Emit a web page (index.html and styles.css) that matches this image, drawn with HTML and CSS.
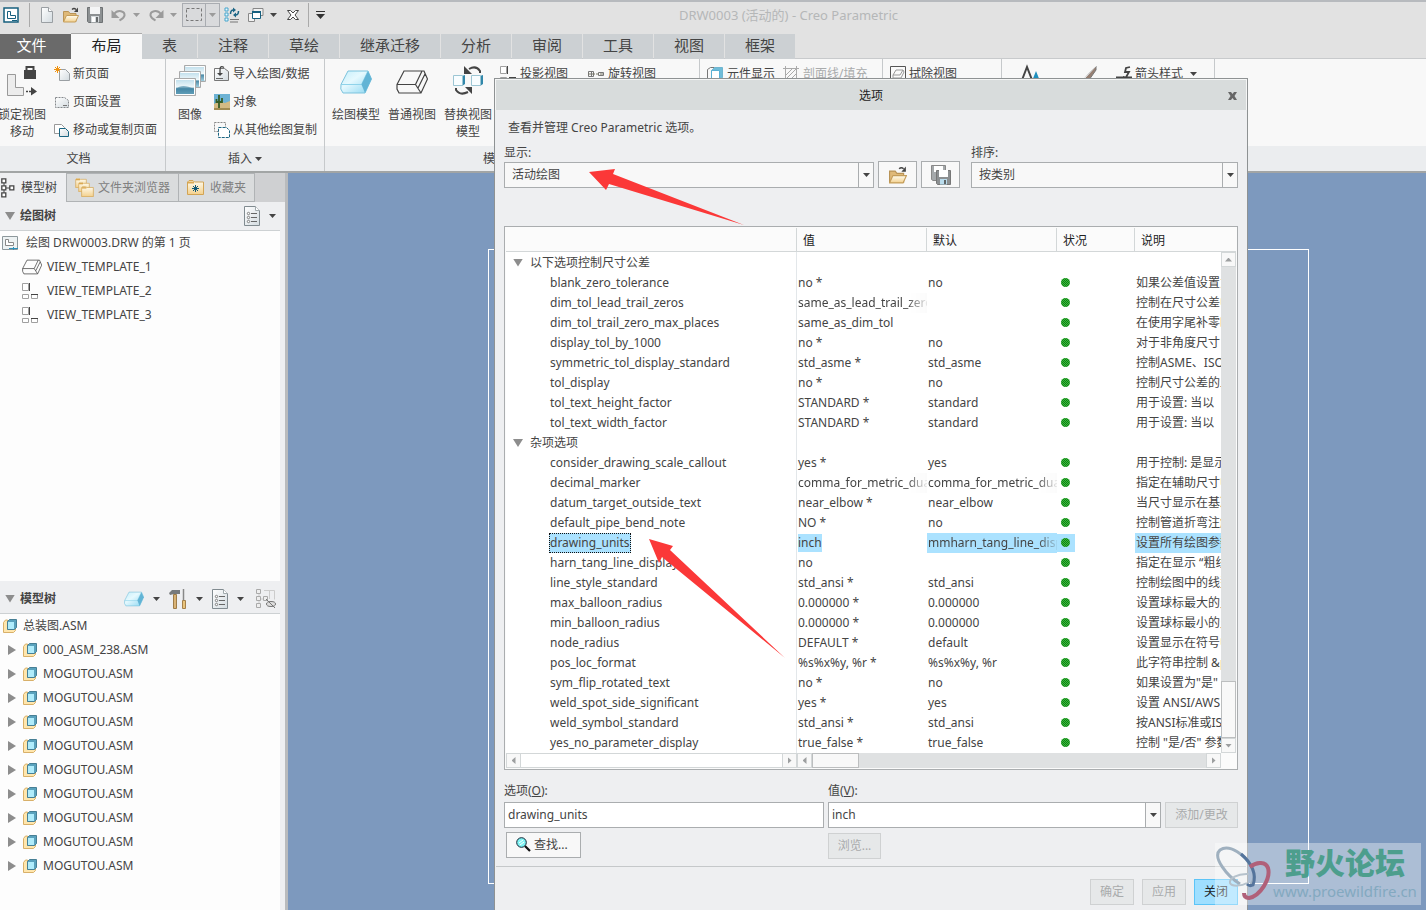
FILE: index.html
```html
<!DOCTYPE html>
<html lang="zh-CN">
<head>
  <meta charset="UTF-8">
  <meta name="viewport" content="width=device-width, initial-scale=1.0">
  <title>DRW0003 (活动的) - Creo Parametric</title>
  <link rel="stylesheet" href="styles.css">
</head>
<body>
  <!-- shared icons -->
  <svg class="sprite" aria-hidden="true">
    <defs>
      <linearGradient id="g-blue" x1="0" y1="0" x2="1" y2="1"><stop offset="0" stop-color="#c4eefb"/><stop offset=".4" stop-color="#e6f9fe"/><stop offset="1" stop-color="#8ad6f1"/></linearGradient>
      <linearGradient id="g-gold" x1="0" y1="0" x2="0" y2="1"><stop offset="0" stop-color="#fffdf2"/><stop offset="1" stop-color="#f3d08c"/></linearGradient>
      <linearGradient id="g-page" x1="0" y1="0" x2="1" y2="1"><stop offset="0" stop-color="#fff"/><stop offset="1" stop-color="#d3dbe0"/></linearGradient>
      <linearGradient id="g-sea" x1="0" y1="0" x2="0" y2="1"><stop offset="0" stop-color="#b9dbea"/><stop offset=".5" stop-color="#eef7fa"/><stop offset=".6" stop-color="#4f8ca8"/><stop offset="1" stop-color="#a6d3e3"/></linearGradient>
    </defs>
    <symbol id="i-caret" viewBox="0 0 7 4"><path d="M0 0h7L3.500 4z" fill="currentColor"/></symbol>
    <symbol id="i-page" viewBox="0 0 16 16"><path d="M2.500.5h7l4 4v11h-11z" fill="url(#g-page)" stroke="#9a9fa3"/><path d="M9.500.5v4h4" fill="#fff" stroke="#9a9fa3"/></symbol>
    <symbol id="i-open" viewBox="0 0 16 16"><path d="M.5 14.500v-10h5l1.500 2h6v8z" fill="#dfb978" stroke="#b99457"/><path d="M.5 15l3-6.500h12l-3 6.500z" fill="url(#g-gold)" stroke="#c49d5a"/><path d="M9 2.500q2-2 4 0" fill="none" stroke="#444" stroke-width="1.300"/><path d="M15 .5V5h-4z" fill="#444"/></symbol>
    <symbol id="i-save" viewBox="0 0 16 16"><path d="M.5.5h15v15h-14l-1-1z" fill="#8c9092" stroke="#6e7274"/><path d="M3 0h10v7H3z" fill="#f4f5f6"/><path d="M4 9h8v6.500H4z" fill="#d5dadd"/><path d="M5 10h3v5H5z" fill="#fff"/><path d="M9 10h2v5H9z" fill="#666a6c"/></symbol>
    <symbol id="i-saveas" viewBox="0 0 20 20"><path d="M.5.5h14v15H2l-1.500-1z" fill="#a5a9ab" stroke="#888"/><path d="M3 1h9v6H3z" fill="#fff"/><path d="M5.500 5.500h14v14h-13l-1-1z" fill="#8c9092" stroke="#777"/><path d="M8 5h9v7H8z" fill="#fff"/><path d="M9 14h7v5.500H9z" fill="#b9dced"/><path d="M13 15h2v4h-2z" fill="#5f6567"/></symbol>
    <symbol id="i-undo" viewBox="0 0 16 14"><path d="M3 6C7 1 14 3 13.500 7.500 13 10 11 11 8.500 12.500" fill="none" stroke="#9b9b9b" stroke-width="2"/><path d="M.5 2v8h8z" fill="#9b9b9b"/></symbol>
    <symbol id="i-block" viewBox="0 0 32 24"><path d="M1 14.500L8 1h20l3.500 8-6.500 14H3L.8 19z" fill="url(#g-blue)" stroke="#7cc3dd"/><path d="M1 14.500h20.500L28 1" fill="none" stroke="#8fd3ea"/><path d="M28 1l3.500 8L25 23l-3.500-8.500z" fill="#62b4d5"/></symbol>
    <symbol id="i-wire" viewBox="0 0 32 24"><path d="M1 14.500L8 1h20l3.500 8-6.500 14H3l-2-4zM1 14.500h18.500l5.500 8.500M19.500 14.500L26 1M22 18L29 4" fill="none" stroke="#444" stroke-width="1.200"/></symbol>
    <symbol id="i-views" viewBox="0 0 16 16"><path d="M.5.5h6v7h-6zM.5 11.500h6v4h-6zM9.500 11.500h6v4h-6z" fill="#fff" stroke="#a0a0a0"/><path d="M7.500 0v8" stroke="#444"/><path d="M9 11.500h7" stroke="#444"/></symbol>
    <symbol id="i-asm" viewBox="0 0 14 14"><path d="M.5 3.500l2-2.500h2v9h8v1.500l-2 2H.5z" fill="#ffe6ad" stroke="#d8b069"/><path d="M4.500 2.500l2-2h7v8l-2 2h-7z" fill="#5aa2bd" stroke="#467f95"/><path d="M5 3h6v7H5z" fill="#b0ecfb"/></symbol>
    <symbol id="i-list" viewBox="0 0 16 20"><path d="M.5.5h11l4 4v15H.5z" fill="url(#g-page)" stroke="#818b90"/><path d="M11.500.5v4h4" fill="#fff" stroke="#a1aaad"/><path d="M7 7.500h6M7 11.500h6M7 15.500h6" stroke="#666"/><g fill="#fff" stroke="#666" stroke-width=".8"><circle cx="4.500" cy="7.500" r="1.200"/><circle cx="4.500" cy="11.500" r="1.200"/><circle cx="4.500" cy="15.500" r="1.200"/></g></symbol>
    <symbol id="i-nodes" viewBox="0 0 14 20"><path d="M3 5v10M5 10h4" stroke="#444"/><path d="M.8.8h4v4h-4zM.8 7.800h4v4h-4zM.8 14.800h4v4h-4zM8.800 7.800h4v4h-4z" fill="#fff" stroke="#444" stroke-width="1.300"/></symbol>
    <symbol id="i-folder" viewBox="0 0 17 15"><path d="M.5 14.500V2L2 .5h4L7.500 2h9v12.500z" fill="url(#g-gold)" stroke="#d2a454"/><path d="M1 2.500h6" stroke="#dba952" stroke-width="2"/></symbol>
  </svg>

  <header class="titlebar">
    <div class="quickbar">
      <svg class="ic16" viewBox="0 0 16 16"><path d="M1 1h14v14H1z" fill="#fff" stroke="#17607f" stroke-width="1.500"/><path d="M4.500 4.500h3v4h5v3h-8z" fill="none" stroke="#17607f"/><path d="M9 13.500h5" stroke="#17607f"/></svg>
      <span class="bar-sep"></span>
      <button class="tool" aria-label="新建"><svg class="ic16"><use href="#i-page"/></svg></button>
      <button class="tool" aria-label="打开"><svg class="ic16"><use href="#i-open"/></svg></button>
      <button class="tool" aria-label="保存"><svg class="ic16"><use href="#i-save"/></svg></button>
      <button class="tool split off" aria-label="撤消"><svg class="ic16"><use href="#i-undo"/></svg><svg class="caret"><use href="#i-caret"/></svg></button>
      <button class="tool split off" aria-label="重做"><svg class="ic16 flip"><use href="#i-undo"/></svg><svg class="caret"><use href="#i-caret"/></svg></button>
      <button class="select-box off" aria-label="选择"><svg class="ic16" viewBox="0 0 16 14"><path d="M.5.5h15v12H.5z" fill="none" stroke="#777" stroke-dasharray="3 2"/></svg><span><svg class="caret"><use href="#i-caret"/></svg></span></button>
      <button class="tool" aria-label="重新生成"><svg class="ic16" viewBox="0 0 16 16"><path d="M1 1h3v3H1zM1 6h3v3H1zM1 11h3v3H1z" fill="#e8f7fd" stroke="#46a5cc"/><path d="M6.500 7q0-4 3-4M14.500 4q0 4-3 4" fill="none" stroke="#1c6585" stroke-width="1.500"/><path d="M9 .5L12 3 9 5.500zM12 5.500L9 8l3 2.500z" fill="#1c6585"/><path d="M6 12.500h9M6 15h8" stroke="#777"/></svg></button>
      <button class="tool split" aria-label="窗口"><svg class="ic16" viewBox="0 0 16 16"><path d="M5 1.500h10v7H5z" fill="#f2f2f2" stroke="#888"/><path d="M.5 6.500h6v8h-6z" fill="#f2f2f2" stroke="#888"/><path d="M4.500 4.500h8v7h-8z" fill="#fff" stroke="#17607f"/><path d="M4 5h9" stroke="#17607f" stroke-width="2"/></svg><svg class="caret"><use href="#i-caret"/></svg></button>
      <button class="tool close-win" aria-label="关闭窗口"><svg viewBox="0 0 12 12"><path d="M.5 1.500h3L6 4l2.500-2.500h3L8 6l3.500 4.500h-3L6 8l-2.500 2.500h-3L4 6z" fill="#fff" stroke="#444"/></svg></button>
      <span class="bar-sep"></span>
      <button class="tool more" aria-label="自定义"><svg viewBox="0 0 9 8"><path d="M0 .5h9" stroke="#333"/><path d="M0 3h9L4.500 8z" fill="#333"/></svg></button>
    </div>
    <h1>DRW0003 (活动的) - Creo Parametric</h1>
  </header>

  <nav class="tabs">
    <button class="file">文件</button>
    <button class="active">布局</button>
    <button class="short">表</button>
    <button>注释</button>
    <button>草绘</button>
    <button class="long">继承迁移</button>
    <button>分析</button>
    <button>审阅</button>
    <button>工具</button>
    <button>视图</button>
    <button>框架</button>
  </nav>

  <section class="ribbon">
    <div class="group g-doc">
      <div class="tools">
        <button class="big lock">
          <svg viewBox="0 0 32 32"><path d="M1.500 9.500h8v13h8v8h-16z" fill="#ececec" stroke="#999"/><path d="M18 5h12v9H18z" fill="#444"/><path d="M20.500 6V2h7v4" fill="none" stroke="#444" stroke-width="2"/><path d="M20 26.500h8" stroke="#444" stroke-width="1.500" stroke-dasharray="2 1"/><path d="M25 22l6 4.500-6 4z" fill="#444"/></svg>
          <span>锁定视图<br>移动</span>
        </button>
        <div class="list">
          <button><svg class="ic16" viewBox="0 0 16 16"><path d="M5.500 3.500h6l4 4v7h-10z" fill="url(#g-page)" stroke="#9a9fa3"/><path d="M3.500 0v7M0 3.500h7M1 1l5 5M6 1L1 6" stroke="#f0920e"/></svg>新页面</button>
          <button><svg class="ic16" viewBox="0 0 16 16"><path d="M1.500 3.500h9l4 3v7h-13z" fill="url(#g-page)" stroke="#85898c" stroke-dasharray="2 1"/><path d="M9 11.500h4" stroke="#777"/></svg>页面设置</button>
          <button><svg class="ic16" viewBox="0 0 16 16"><path d="M.5 2.500h7l3 3v6H.5z" fill="#fff" stroke="#999"/><path d="M5.500 6.500h6l3 3v5h-9z" fill="url(#g-page)" stroke="#1a6481"/></svg>移动或复制页面</button>
        </div>
      </div>
      <div class="group-name">文档</div>
    </div>
    <div class="group g-insert">
      <div class="tools">
        <button class="big">
          <svg viewBox="0 0 32 32"><g stroke="#aaa" fill="url(#g-sea)"><path d="M10.500.5h21v16h-21z"/><path d="M5.500 6.500h21v16h-21z"/><path d="M.5 13.500h21v17H.5z"/></g><g fill="none" stroke="#fff"><path d="M11.500 1.500h19v14"/><path d="M6.500 7.500h19v14"/><path d="M1.500 14.500h19v15h-19z"/></g><path d="M2 24q6-6 18 0v5H2z" fill="#3d83a3" opacity=".6"/></svg>
          <span>图像</span>
        </button>
        <div class="list">
          <button><svg class="ic16" viewBox="0 0 16 16"><path d="M.5 2.500h10l4 3v9H.5z" fill="url(#g-page)" stroke="#777"/><path d="M10 1.500Q6-1 6 4v4" fill="none" stroke="#444" stroke-width="1.300"/><path d="M3 7h6l-3 3z" fill="#444"/><path d="M2 12.500h7" stroke="#666"/></svg>导入绘图/数据</button>
          <button><svg class="ic16" viewBox="0 0 16 16"><path d="M0 0h16v16H0z" fill="#6db2d4"/><path d="M0 10l5-3 6 2 5-2v9H0z" fill="#d4ba83"/><path d="M5 1v13M2.500 5v3H5M8 4v4H5" fill="none" stroke="#365d26" stroke-width="1.800"/><path d="M0 14h16v2H0z" fill="#a18b51"/></svg>对象</button>
          <button><svg class="ic16" viewBox="0 0 16 16"><path d="M.5.5h11v9H.5z" fill="none" stroke="#888" stroke-dasharray="2 1"/><path d="M4.500 5.500h8l3 3v7h-11z" fill="#fff" stroke="#1a6481" stroke-dasharray="3 1"/></svg>从其他绘图复制</button>
        </div>
      </div>
      <div class="group-name">插入<svg class="caret"><use href="#i-caret"/></svg></div>
    </div>
    <div class="group g-views">
      <div class="tools">
        <button class="big"><svg class="pad-ic"><use href="#i-block"/></svg><span>绘图模型</span></button>
        <button class="big"><svg class="pad-ic"><use href="#i-wire"/></svg><span>普通视图</span></button>
        <button class="big">
          <svg viewBox="0 0 32 32"><path d="M10 11l3-1v9l-3 2zM28 11l3-1v9l-3 2z" fill="#3187aa"/><path d="M1.500 10.500h9v10h-9zM19.500 10.500h9v10h-9z" fill="#f8fdff" stroke="#9cc6d4"/><path d="M28 8V6q-4-6-11-2M4 23v2q4 6 12 2" fill="none" stroke="#444" stroke-width="2"/><path d="M12 1v8h8zM20 29v-7h-7z" fill="#444"/></svg>
          <span>替换视图<br>模型</span>
        </button>
        <div class="list"><button><svg class="ic16"><use href="#i-views"/></svg>投影视图</button></div>
        <div class="list"><button><svg class="ic16" viewBox="0 0 16 16"><path d="M.5 5.500h5v5h-5zM10.500 6.500h5v3h-5zM3.500 5v6" fill="none" stroke="#777"/><path d="M0 8h16" stroke="#776" stroke-dasharray="3 1"/></svg>旋转视图</button></div>
      </div>
      <div class="group-name">模型视图<svg class="caret"><use href="#i-caret"/></svg></div>
    </div>
    <div class="group g-edit">
      <div class="tools">
        <div class="list"><button><svg class="ic16" viewBox="0 0 16 16"><path d="M.5 15V3.500l3-2h4" fill="none" stroke="#777"/><path d="M4.500 4.500l3-3h8v10l-3 3h-8z" fill="#6fbcd8" stroke="#6fb6d0"/><path d="M4.500 4.500h8v10h-8z" fill="#fff" stroke="#59b1d4"/></svg>元件显示</button></div>
        <div class="list"><button disabled><svg class="ic16" viewBox="0 0 16 16"><path d="M0 2.500h16M0 13.500h16M2.500 0v16M13.500 0v16M3 9l6-6M3 13L13 3M8 13l5-5" stroke="#aaa"/></svg>剖面线/填充</button></div>
      </div>
      <div class="group-name">编辑</div>
    </div>
    <div class="group g-show">
      <div class="tools">
        <div class="list"><button><svg class="ic16" viewBox="0 0 16 16"><path d="M.5.5h15v15H.5z" fill="#fafafa" stroke="#555"/><path d="M3 9l3-5h7l1 2-3 6H3zM3 9h7l3-5" fill="none" stroke="#999"/></svg>拭除视图</button></div>
      </div>
      <div class="group-name">显示</div>
    </div>
    <div class="group g-format">
      <div class="tools">
        <svg class="ic20" viewBox="0 0 20 20"><path d="M2 16L7 3l5 13z" fill="none" stroke="#444" stroke-width="2"/><path d="M12 17l4-10 4 10z" fill="#1f8fbd"/></svg>
        <svg class="ic20" viewBox="0 0 20 20"><path d="M4 15L16 2v4L9 16z" fill="#967f72" stroke="#777"/><path d="M4 15L16 2" stroke="#eee"/></svg>
        <div class="list"><button><svg class="ic16" viewBox="0 0 16 16"><path d="M0 11.500h16M14 1L10 2 9 6h4l-4 7" fill="none" stroke="#444" stroke-width="1.800"/><path d="M7 10v5l5-3z" fill="#444"/></svg>箭头样式<svg class="caret"><use href="#i-caret"/></svg></button></div>
      </div>
      <div class="group-name">格式</div>
    </div>
    <div class="group rest"><div class="tools"></div><div class="group-name"></div></div>
  </section>

  <main class="workspace">
    <aside class="side">
      <div class="side-tabs">
        <button class="active"><svg class="nodes"><use href="#i-nodes"/></svg>模型树</button>
        <button class="folders"><svg viewBox="0 0 19 19"><use href="#i-folder" width="12" height="10"/><use href="#i-folder" x="3" y="4" width="12" height="10"/><use href="#i-folder" x="6" y="8" width="13" height="11"/></svg>文件夹浏览器</button>
        <button class="favs"><svg viewBox="0 0 17 15"><use href="#i-folder" width="17" height="15"/><path d="M8.500 5v7M5 8.500h7M6 6l5 5M11 6l-5 5" stroke="#0f5878"/></svg>收藏夹</button>
      </div>
      <div class="side-body">
        <div class="tree-head">
          <span class="twist open"></span><h2>绘图树</h2>
          <button class="tool split" aria-label="显示"><svg class="list-ic"><use href="#i-list"/></svg><svg class="caret"><use href="#i-caret"/></svg></button>
        </div>
        <ul class="tree draw-tree">
          <li class="root"><svg class="ic16" viewBox="0 0 16 16"><path d="M.5 1.500h15v13H.5z" fill="#edf2f3" stroke="#8d989c"/><path d="M3.500 4.500h3v3h5v3h-8z" fill="#fff" stroke="#888"/><path d="M7 13.500h9M11.500 12v3" stroke="#2f91b9"/></svg><span>绘图 DRW0003.DRW 的第 1 页</span></li>
          <li><svg class="wire-sm"><use href="#i-wire"/></svg><span>VIEW_TEMPLATE_1</span></li>
          <li><svg class="wire-sm"><use href="#i-views" width="16"/></svg><span>VIEW_TEMPLATE_2</span></li>
          <li><svg class="wire-sm"><use href="#i-views" width="16"/></svg><span>VIEW_TEMPLATE_3</span></li>
        </ul>
        <div class="tree-head model-head">
          <span class="twist open"></span><h2>模型树</h2>
          <button class="tool split" aria-label="模型"><svg class="ic20"><use href="#i-block"/></svg><svg class="caret"><use href="#i-caret"/></svg></button>
          <button class="tool split" aria-label="设置"><svg class="hammer" viewBox="0 0 18 20"><path d="M0 4l3-3h8v4H5L1 6z" fill="#777b7e"/><path d="M4.500 5.500h3v14h-3z" fill="#d9b376" stroke="#9e7c48"/><path d="M14.500 0v11" stroke="#888" stroke-width="1.500"/><path d="M13.500 11.500h3v8h-3z" fill="#e9c47b" stroke="#a5804a"/></svg><svg class="caret"><use href="#i-caret"/></svg></button>
          <button class="tool split" aria-label="显示"><svg class="list-ic"><use href="#i-list"/></svg><svg class="caret"><use href="#i-caret"/></svg></button>
          <button class="tool" aria-label="隐藏"><svg class="hide-ic" viewBox="0 0 20 20"><path d="M3 5v10M5 10h5M8 1.500h10.500v9M13.500 2v8" fill="none" stroke="#ccc"/><path d="M.5.5h4v4h-4zM.5 7.500h4v4h-4zM.5 14.500h4v4h-4zM7.500 7.500h4v4h-4z" fill="#eee" stroke="#aaa"/><ellipse cx="15" cy="15" rx="4.500" ry="2.500" fill="#ddd" stroke="#777"/><path d="M10 10l9 9" stroke="#777"/></svg></button>
        </div>
        <ul class="tree model-tree">
          <li class="root"><svg class="asm"><use href="#i-asm"/></svg><span>总装图.ASM</span></li>
          <li><i class="twist"></i><svg class="asm"><use href="#i-asm"/></svg><span>000_ASM_238.ASM</span></li>
          <li><i class="twist"></i><svg class="asm"><use href="#i-asm"/></svg><span>MOGUTOU.ASM</span></li>
          <li><i class="twist"></i><svg class="asm"><use href="#i-asm"/></svg><span>MOGUTOU.ASM</span></li>
          <li><i class="twist"></i><svg class="asm"><use href="#i-asm"/></svg><span>MOGUTOU.ASM</span></li>
          <li><i class="twist"></i><svg class="asm"><use href="#i-asm"/></svg><span>MOGUTOU.ASM</span></li>
          <li><i class="twist"></i><svg class="asm"><use href="#i-asm"/></svg><span>MOGUTOU.ASM</span></li>
          <li><i class="twist"></i><svg class="asm"><use href="#i-asm"/></svg><span>MOGUTOU.ASM</span></li>
          <li><i class="twist"></i><svg class="asm"><use href="#i-asm"/></svg><span>MOGUTOU.ASM</span></li>
          <li><i class="twist"></i><svg class="asm"><use href="#i-asm"/></svg><span>MOGUTOU.ASM</span></li>
          <li><i class="twist"></i><svg class="asm"><use href="#i-asm"/></svg><span>MOGUTOU.ASM</span></li>
        </ul>
      </div>
    </aside>
    <div class="canvas"><div class="sheet"></div></div>
  </main>

  <div class="dialog" role="dialog" aria-labelledby="dlg-title">
    <div class="dlg-title">
      <h2 id="dlg-title">选项</h2>
      <button aria-label="关闭"><svg viewBox="0 0 9 8"><path d="M0 0h3l1.500 2L6 0h3L6.500 4 9 8H6L4.500 6 3 8H0l2.500-4z" fill="#666"/></svg></button>
    </div>
    <div class="dlg-body">
      <p>查看并管理 Creo Parametric 选项。</p>
      <div class="row filters">
        <div class="field show">
          <label for="show">显示:</label>
          <div class="combo"><select id="show"><option>活动绘图</option></select><span class="drop"><svg class="caret"><use href="#i-caret"/></svg></span></div>
        </div>
        <button class="icon-btn" aria-label="打开配置文件"><svg class="ic18"><use href="#i-open"/></svg></button>
        <button class="icon-btn" aria-label="保存配置文件"><svg class="ic20"><use href="#i-saveas"/></svg></button>
        <div class="field sort">
          <label for="sort">排序:</label>
          <div class="combo"><select id="sort"><option>按类别</option></select><span class="drop"><svg class="caret"><use href="#i-caret"/></svg></span></div>
        </div>
      </div>

      <div class="grid-box">
        <div class="grid-main">
          <table>
            <colgroup><col class="c-name"><col class="c-val"><col class="c-val"><col class="c-stat"><col></colgroup>
            <thead>
              <tr><th></th><th>值</th><th>默认</th><th>状况</th><th>说明</th></tr>
            </thead>
            <tbody>
              <tr class="cat"><td><i class="twist open"></i>以下选项控制尺寸公差</td><td></td><td></td><td></td><td></td></tr>
              <tr><td>blank_zero_tolerance</td><td>no *</td><td>no</td><td><i class="dot"></i></td><td>如果公差值设置为</td></tr>
              <tr><td>dim_tol_lead_trail_zeros</td><td class="fade">same_as_lead_trail_zeros</td><td></td><td><i class="dot"></i></td><td>控制在尺寸公差中</td></tr>
              <tr><td>dim_tol_trail_zero_max_places</td><td>same_as_dim_tol</td><td></td><td><i class="dot"></i></td><td>在使用字尾补零时</td></tr>
              <tr><td>display_tol_by_1000</td><td>no *</td><td>no</td><td><i class="dot"></i></td><td>对于非角度尺寸</td></tr>
              <tr><td>symmetric_tol_display_standard</td><td>std_asme *</td><td>std_asme</td><td><i class="dot"></i></td><td>控制ASME、ISO</td></tr>
              <tr><td>tol_display</td><td>no *</td><td>no</td><td><i class="dot"></i></td><td>控制尺寸公差的显</td></tr>
              <tr><td>tol_text_height_factor</td><td>STANDARD *</td><td>standard</td><td><i class="dot"></i></td><td>用于设置: 当以</td></tr>
              <tr><td>tol_text_width_factor</td><td>STANDARD *</td><td>standard</td><td><i class="dot"></i></td><td>用于设置: 当以</td></tr>
              <tr class="cat"><td><i class="twist open"></i>杂项选项</td><td></td><td></td><td></td><td></td></tr>
              <tr><td>consider_drawing_scale_callout</td><td>yes *</td><td>yes</td><td><i class="dot"></i></td><td>用于控制: 是显示</td></tr>
              <tr><td>decimal_marker</td><td class="fade">comma_for_metric_dual</td><td class="fade">comma_for_metric_dual</td><td><i class="dot"></i></td><td>指定在辅助尺寸中</td></tr>
              <tr><td>datum_target_outside_text</td><td>near_elbow *</td><td>near_elbow</td><td><i class="dot"></i></td><td>当尺寸显示在基准</td></tr>
              <tr><td>default_pipe_bend_note</td><td>NO *</td><td>no</td><td><i class="dot"></i></td><td>控制管道折弯注解</td></tr>
              <tr class="picked"><td><span class="focus">drawing_units</span></td><td><span class="hit">inch</span></td><td class="hit"><div class="fade">mmharn_tang_line_display</div></td><td><span class="hit"><i class="dot"></i></span></td><td class="hit">设置所有绘图参数</td></tr>
              <tr><td>harn_tang_line_display</td><td>no</td><td></td><td><i class="dot"></i></td><td>指定在显示 “粗线</td></tr>
              <tr><td>line_style_standard</td><td>std_ansi *</td><td>std_ansi</td><td><i class="dot"></i></td><td>控制绘图中的线型</td></tr>
              <tr><td>max_balloon_radius</td><td>0.000000 *</td><td>0.000000</td><td><i class="dot"></i></td><td>设置球标最大的允</td></tr>
              <tr><td>min_balloon_radius</td><td>0.000000 *</td><td>0.000000</td><td><i class="dot"></i></td><td>设置球标最小的允</td></tr>
              <tr><td>node_radius</td><td>DEFAULT *</td><td>default</td><td><i class="dot"></i></td><td>设置显示在符号中</td></tr>
              <tr><td>pos_loc_format</td><td>%s%x%y, %r *</td><td>%s%x%y, %r</td><td><i class="dot"></i></td><td>此字符串控制 &amp;p</td></tr>
              <tr><td>sym_flip_rotated_text</td><td>no *</td><td>no</td><td><i class="dot"></i></td><td>如果设置为"是"</td></tr>
              <tr><td>weld_spot_side_significant</td><td>yes *</td><td>yes</td><td><i class="dot"></i></td><td>设置 ANSI/AWS</td></tr>
              <tr><td>weld_symbol_standard</td><td>std_ansi *</td><td>std_ansi</td><td><i class="dot"></i></td><td>按ANSI标准或ISO</td></tr>
              <tr><td>yes_no_parameter_display</td><td>true_false *</td><td>true_false</td><td><i class="dot"></i></td><td>控制 "是/否" 参数</td></tr>
            </tbody>
          </table>
          <div class="vbar"><span class="sb-head"></span><button class="up" aria-label="向上"></button><span class="track"></span><span class="thumb"></span><button class="down" aria-label="向下"></button></div>
        </div>
        <div class="hbars">
          <div class="hbar first"><button class="left" aria-label="向左"></button><span class="track"></span><button class="right" aria-label="向右"></button></div>
          <div class="hbar"><button class="left" aria-label="向左"></button><span class="thumb"></span><span class="track"></span><button class="right" aria-label="向右"></button></div>
        </div>
      </div>

      <div class="row edit">
        <div class="field opt">
          <label for="opt">选项(<u>O</u>):</label>
          <div class="combo white"><input id="opt" type="text" value="drawing_units"></div>
          <button class="btn find"><svg viewBox="0 0 15 15"><path d="M9 9l5 5" stroke="#111" stroke-width="2.200"/><circle cx="5.500" cy="5.500" r="4.800" fill="#7ff4f4" stroke="#123"/><path d="M3 6l4-3M4 8l4-3" stroke="#fff"/></svg>查找...</button>
        </div>
        <div class="field val">
          <label for="val">值(<u>V</u>):</label>
          <div class="row">
            <div class="combo white"><input id="val" type="text" value="inch"><button class="drop" aria-label="展开"><svg class="caret"><use href="#i-caret"/></svg></button></div>
            <button class="btn add" disabled>添加/更改</button>
          </div>
          <button class="btn browse" disabled>浏览...</button>
        </div>
      </div>
    </div>
    <footer class="dlg-foot">
      <button class="btn" disabled>确定</button>
      <button class="btn" disabled>应用</button>
      <button class="btn primary">关闭</button>
    </footer>

    <svg class="arrow arrow-a" viewBox="0 0 156 57" aria-hidden="true"><path d="M0 3L26 0l-2 5 131 51L20 15l-3 6z" fill="#fb3838"/></svg>
    <svg class="arrow arrow-b" viewBox="0 0 137 120" aria-hidden="true"><path d="M0 0l24 7-3 4 115 108L13 18l-3 6z" fill="#fb3838"/></svg>
  </div>

  <div class="mark">
    <svg viewBox="0 0 58 58" aria-hidden="true"><g fill="none"><path d="M25 39C12 31-3 12 5 5c9-6 26 4 33 20 2 6 1 11-2 15" stroke="#9fb0bf" stroke-width="3"/><path d="M26 9c11 9 16 21 12 31-2 1-4 1-6-1" stroke="#54749c" stroke-width="3"/><path d="M35 22c7-6 16-5 18 1 3 11-8 28-19 30-4 0-5-2-5-5" stroke="#b06079" stroke-width="4"/><path d="M34 29c-12-1-20 5-19 9 2 4 12 3 17 0" stroke="#b6c2cc" stroke-width="2"/></g></svg>
    <div><strong>野火论坛</strong><span>www.proewildfire.cn</span></div>
  </div>
</body>
</html>
```
FILE: styles.css
```css
:root {
  --chrome: #e2e2e2;
  --panel: #eeeff1;
  --light: #f8f8f8;
  --tab: #ccd0d3;
  --line: #aaadaf;
  --soft-line: #d3d7d8;
  --text: #444444;
  --off: #a9abac;
  --canvas: #7d99be;
  --pick: #abe2ff;
}

* {
  margin: 0;
  padding: 0;
  box-sizing: border-box;
}

body {
  position: relative;
  display: flex;
  flex-direction: column;
  height: 100vh;
  min-height: 910px;
  overflow: hidden;
  font-family: "Noto Sans", "Noto Sans CJK SC", sans-serif;
  font-size: 12px;
  line-height: 16px;
  color: var(--text);
  background: var(--chrome);
}

button,
input,
select {
  font: inherit;
  color: inherit;
  background: none;
  border: none;
  border-radius: 0;
}

button {
  white-space: nowrap;
}

svg {
  flex: none;
  display: block;
}

ul {
  list-style: none;
}

.sprite {
  position: absolute;
  width: 0;
  height: 0;
}

.ic16 { width: 16px; height: 16px; }
.ic18 { width: 18px; height: 18px; }
.ic20 { width: 20px; height: 20px; }
.caret { width: 7px; height: 4px; }
.flip { transform: scaleX(-1); }

/* title bar */
.titlebar {
  display: flex;
  align-items: center;
  height: 33px;
  padding-bottom: 5px;
  border-top: 2px solid #b7babe;
}

.quickbar {
  display: flex;
  align-items: center;
  gap: 8px;
  padding-left: 3px;
}

.bar-sep {
  width: 1px;
  height: 24px;
  margin: 0 1px 0 2px;
  background: #aaa;
}

.tool {
  display: flex;
  align-items: center;
}

.split {
  gap: 6px;
}

.off {
  color: #9b9b9b;
}

.select-box {
  display: flex;
  align-items: center;
  height: 24px;
  margin: 0 -4px 0 -3px;
  padding-left: 3px;
  border: 1px solid #a9acb1;
  background: #d9dadc;
}

.select-box span {
  display: flex;
  align-items: center;
  height: 22px;
  margin-left: 3px;
  padding: 0 3px;
  border-left: 1px solid #a9acb1;
}

.close-win svg { width: 12px; height: 12px; margin: 0 -1px 0 2px; }
.more svg { width: 9px; height: 8px; margin-left: -2px; }

.titlebar h1 {
  flex: 1;
  padding-right: 174px;
  text-align: center;
  font-size: 13px;
  font-weight: normal;
  color: #b5b7b8;
}

/* ribbon tabs */
.tabs {
  display: flex;
  gap: 1px;
  height: 26px;
  border-bottom: 1px solid #c8cacc;
}

.tabs button {
  width: 70px;
  height: 25px;
  margin-top: 1px;
  padding-bottom: 3px;
  font-size: 15px;
  line-height: 20px;
  background: var(--tab);
}

.tabs .file {
  width: 71px;
  margin-right: -1px;
  padding-right: 8px;
  color: #fff;
  background: #6a6a6a;
}

.tabs .active {
  width: 71px;
  height: 26px;
  margin: 0 -1px 0 0;
  border-top: 1px solid #aaa;
  color: #222;
  background: var(--light);
}

.tabs .short { width: 55px; }
.tabs .long { width: 100px; }

/* ribbon */
.ribbon {
  display: flex;
  height: 114px;
  background: var(--light);
  border-bottom: 2px solid #a2a5a5;
}

.group {
  flex: none;
  display: flex;
  flex-direction: column;
  border-right: 1px solid #c6c9cb;
}

.g-doc { width: 166px; }
.g-insert { width: 159px; }
.g-views { width: 375px; }
.g-edit { width: 183px; }
.g-show { width: 119px; }
.g-format { width: 213px; }
.rest { flex: 1; border: none; }

.tools {
  display: flex;
  gap: 8px;
  height: 87px;
  padding-top: 1px;
  overflow: hidden;
}

.big {
  flex: none;
  display: flex;
  flex-direction: column;
  align-items: center;
  gap: 9px;
  width: 48px;
  padding-top: 5px;
  line-height: 17px;
}

.big svg {
  width: 32px;
  height: 32px;
}

.big .pad-ic {
  padding: 5px 0 3px;
}

.lock {
  margin-left: -2px;
}

.g-insert .tools { gap: 0; }
.g-views .tools { padding-left: 7px; }

.list {
  flex: none;
  white-space: nowrap;
}

.list button {
  display: flex;
  align-items: center;
  gap: 3px;
  height: 28px;
}

.list button:disabled {
  color: var(--off);
}

.g-views .list button { gap: 4px; margin-right: 12px; }
.g-edit .tools, .g-show .tools { padding-left: 7px; }
.g-edit .list button { gap: 4px; }
.g-format .tools { padding: 5px 0 0 18px; gap: 40px; }
.g-format .list { margin: -4px 0 0 -24px; }
.g-format .caret { margin-left: 4px; }

.group-name {
  display: flex;
  align-items: center;
  justify-content: center;
  gap: 3px;
  height: 25px;
  background: #ebedef;
}

.g-doc .group-name {
  padding-right: 8px;
}

/* workspace */
.workspace {
  flex: 1;
  display: flex;
  background: var(--canvas);
}

.side {
  flex: none;
  display: flex;
  flex-direction: column;
  width: 288px;
  border-right: 3px solid #b9bbbd;
  background: var(--panel);
}

.side-tabs {
  display: flex;
  height: 29px;
  background: #cfd0d2;
}

.side-tabs button {
  display: flex;
  align-items: center;
  gap: 4px;
  border: 1px solid #b0b3b5;
  border-left: none;
  color: #808080;
  background: #dadcdd;
}

.side-tabs .active {
  width: 67px;
  padding-left: 1px;
  gap: 6px;
  border-top: none;
  border-bottom: none;
  color: var(--text);
  background: var(--panel);
}

.side-tabs .folders { width: 112px; padding-left: 8px; }
.side-tabs .favs { width: 76px; padding-left: 8px; gap: 6px; }
.side-tabs .nodes { width: 14px; height: 20px; }
.folders svg { width: 19px; height: 19px; }
.favs svg { width: 17px; height: 15px; }

.side-body {
  flex: 1;
  display: flex;
  flex-direction: column;
  margin-right: 5px;
}

.tree-head {
  display: flex;
  align-items: center;
  gap: 9px;
  height: 29px;
  padding: 0 4px 0 5px;
  border-bottom: 1px solid #cdd1d3;
}

.tree-head h2 {
  flex: 1;
  margin-left: -4px;
  font-size: 12px;
}

.tree-head .split {
  gap: 9px;
}

.model-head {
  height: 33px;
  padding-top: 3px;
}

.list-ic { width: 16px; height: 20px; }
.hammer { width: 18px; height: 20px; }
.hide-ic { width: 20px; height: 20px; margin-left: 3px; }

.twist {
  flex: none;
  display: inline-block;
  width: 8px;
  height: 10px;
  background: #8d8d8d;
  clip-path: polygon(0 0, 100% 50%, 0 100%);
}

.twist.open {
  width: 10px;
  height: 8px;
  clip-path: polygon(0 0, 100% 0, 50% 100%);
}

.tree {
  background: #fdfdfd;
}

.tree li {
  display: flex;
  align-items: center;
  height: 24px;
  padding-left: 8px;
}

.draw-tree {
  height: 350px;
}

.draw-tree li { gap: 5px; padding-left: 22px; }
.draw-tree .root { gap: 8px; padding-left: 2px; }
.wire-sm { width: 20px; height: 16px; }

.model-tree {
  flex: 1;
}

.model-tree li { gap: 7px; }
.model-tree .root { gap: 7px; padding-left: 3px; }
.asm { width: 14px; height: 14px; }
.model-tree li span { margin-left: -1px; }

.canvas {
  flex: 1;
  display: flex;
  padding: 76px 117px 26px 200px;
}

.sheet {
  flex: 1;
  border: 1px solid #fff;
}

/* options dialog, floats over the drawing */
.dialog {
  position: absolute;
  top: 78px;
  right: 178px;
  bottom: 0;
  left: 494px;
  display: flex;
  flex-direction: column;
  border: 1px solid #8e9293;
  border-bottom: none;
  background: var(--panel);
}

.dlg-title {
  display: flex;
  align-items: center;
  height: 31px;
  padding: 2px 9px 0 18px;
  border: 1px solid #f5f6f6;
  border-bottom: none;
  background: #d8dcdc;
}

.dlg-title h2 {
  flex: 1;
  text-align: center;
  font-size: 12px;
  font-weight: normal;
  color: #222;
}

.dlg-title svg { width: 9px; height: 8px; }

.dlg-body {
  display: flex;
  flex-direction: column;
  height: 756px;
  padding: 9px 9px 0;
}

.dlg-body p {
  padding-left: 4px;
  line-height: 18px;
}

.row {
  display: flex;
  gap: 4px;
}

.filters {
  align-items: flex-end;
  margin-top: 8px;
}

.field label {
  display: block;
  height: 17px;
}

.show { flex: 370; }
.sort { flex: 267; margin-left: 7px; }

.combo {
  flex: 1;
  display: flex;
  height: 26px;
  border: 1px solid var(--line);
  background: var(--light);
}

.combo select,
.combo input {
  flex: 1;
  width: 0;
  padding: 0 7px 1px;
  appearance: none;
  outline: none;
}

.combo.white { background: #fff; }
.combo input { padding: 0 3px 1px; }

.drop {
  display: flex;
  align-items: center;
  justify-content: center;
  width: 15px;
  border-left: 1px solid var(--line);
  background: var(--light);
  pointer-events: none;
}

.icon-btn {
  display: flex;
  align-items: center;
  justify-content: center;
  width: 39px;
  height: 27px;
  border: 1px solid var(--line);
  background: var(--light);
}

/* option list */
.grid-box {
  margin-top: 38px;
  padding: 1px;
  border: 1px solid var(--line);
  background: #fbfbfb;
}

.grid-main {
  display: flex;
}

table {
  flex: 1;
  width: 0;
  table-layout: fixed;
  border-collapse: separate;
  border-spacing: 0;
}

.c-name { width: 291px; }
.c-val { width: 130px; }
.c-stat { width: 78px; }

th {
  height: 24px;
  padding: 2px 6px 0;
  text-align: left;
  font-weight: normal;
  color: #222;
  border-right: 1px solid var(--soft-line);
  border-bottom: 1px solid var(--soft-line);
}

th:last-child {
  border-right: none;
}

td {
  height: 20px;
  padding-left: 1px;
  line-height: 18px;
  white-space: nowrap;
  overflow: hidden;
  background: #fff;
}

tbody tr:first-child td {
  height: 21px;
}

td:first-child {
  padding-left: 44px;
  border-right: 1px solid #e3e7ea;
}

.cat td:first-child {
  padding-left: 7px;
}

.cat .twist {
  margin: 0 7px 0 0;
}

td:nth-child(4) {
  padding-left: 4px;
}

.fade {
  mask-image: linear-gradient(to right, #000 110px, transparent 132px);
}

.dot {
  display: inline-block;
  width: 9px;
  height: 9px;
  border-radius: 50%;
  background: repeating-conic-gradient(#0d7f14 0 25%, #3cba3c 0 50%) 0 0 / 2px 2px;
}

.focus {
  display: inline-block;
  margin-left: -1px;
  border: 1px dotted #111;
  background: var(--pick);
}

.hit {
  background: var(--pick);
}

span.hit {
  display: inline-block;
}

td:nth-child(4) .hit {
  margin-left: -4px;
  padding: 0 5px 0 4px;
}

/* scroll bars */
.vbar {
  display: flex;
  flex-direction: column;
  width: 15px;
  background: #dfe1e2;
}

.sb-head {
  height: 24px;
  border-bottom: 1px solid var(--soft-line);
  background: #fbfbfb;
}

.track {
  flex: 1;
}

.vbar .thumb {
  height: 57px;
  border: 1px solid #bcbebf;
  background: var(--light);
}

.vbar button,
.hbar button {
  display: flex;
  align-items: center;
  justify-content: center;
  width: 15px;
  height: 15px;
  border: 1px solid var(--soft-line);
  background: var(--light);
}

.vbar button::before,
.hbar button::before {
  content: "";
  width: 7px;
  height: 4px;
  background: #9d9fa0;
}

.hbar button::before { width: 4px; height: 7px; }
.up::before { clip-path: polygon(50% 0, 100% 100%, 0 100%); }
.down::before { clip-path: polygon(0 0, 100% 0, 50% 100%); }
.left::before { clip-path: polygon(100% 0, 100% 100%, 0 50%); }
.right::before { clip-path: polygon(0 0, 100% 50%, 0 100%); }

.hbars {
  display: flex;
  padding-right: 15px;
}

.hbar {
  flex: 1;
  display: flex;
  height: 15px;
  background: #dfe1e2;
}

.hbar.first {
  flex: none;
  width: 291px;
  border: solid var(--soft-line);
  border-width: 1px 0;
  background: #fff;
}

.hbar.first button {
  height: 13px;
  border-width: 0 1px;
}

.hbar .thumb {
  width: 47px;
  border: 1px solid #bcbebf;
  background: var(--light);
}

/* editor row */
.edit {
  margin-top: 13px;
}

.edit .field label {
  height: 19px;
}

.opt { flex: 320; }
.val { flex: 410; }

.btn {
  height: 26px;
  padding-bottom: 1px;
  border: 1px solid var(--line);
  background: var(--light);
}

.btn:disabled {
  border-color: #cfd1d2;
  color: var(--off);
  background: #e6e8e9;
}

.find {
  display: flex;
  align-items: center;
  gap: 3px;
  width: 75px;
  margin: 4px 0 0 2px;
  padding-left: 9px;
}

.find svg { width: 15px; height: 15px; }
.add { width: 73px; }
.browse { width: 53px; margin-top: 5px; }

.dlg-foot {
  display: flex;
  justify-content: flex-end;
  gap: 8px;
  margin: 0 1px;
  padding: 12px 8px 0;
  border-top: 1px solid #c5c8ca;
}

.dlg-foot .btn {
  width: 44px;
}

.dlg-foot .primary {
  border-color: #5cc4f7;
  color: #222;
  background: #9fdfff;
}

/* callout arrows */
.arrow {
  position: absolute;
  pointer-events: none;
}

.arrow-a {
  top: 90px;
  left: 94px;
  width: 156px;
  height: 57px;
}

.arrow-b {
  top: 460px;
  left: 154px;
  width: 137px;
  height: 120px;
}

/* forum mark */
.mark {
  position: absolute;
  right: 5px;
  bottom: 5px;
  display: flex;
  width: 206px;
  height: 62px;
  background: rgba(255, 255, 255, 0.36);
  pointer-events: none;
}

.mark svg {
  width: 58px;
  height: 58px;
  margin-top: 2px;
}

.mark div {
  flex: 1;
  padding-right: 4px;
  text-align: center;
}

.mark strong {
  display: block;
  font-size: 30px;
  font-weight: 900;
  line-height: 40px;
  color: #4d9e8d;
}

.mark span {
  display: block;
  font-size: 15px;
  line-height: 16px;
  color: #83a9c0;
}
```
